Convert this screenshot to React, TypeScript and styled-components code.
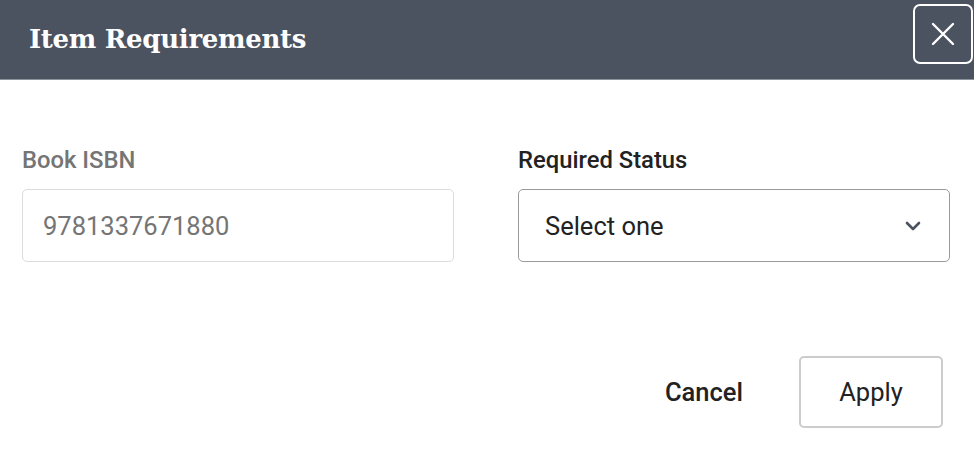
import { FunctionComponent } from 'react';
import styled, { createGlobalStyle } from 'styled-components';

const GlobalStyle = createGlobalStyle`
  html, body {
    margin: 0;
    padding: 0;
    background: #ffffff;
  }
  body {
    font-family: Roboto, 'Liberation Sans', sans-serif;
  }
`;

const App: FunctionComponent = () => {
  return (
    <>
      <GlobalStyle />
      <ModalContainer>
        <ModalHeader>
          <h1>Item Requirements</h1>
          <CloseButton aria-label="Close">
            <svg width="26" height="26" viewBox="0 0 26 26" fill="none">
              <path
                d="M3 3L23 23M23 3L3 23"
                stroke="#ffffff"
                strokeWidth="2.4"
                strokeLinecap="round"
              />
            </svg>
          </CloseButton>
        </ModalHeader>
        <ModalBody>
          <FieldRow>
            <Field>
              <FieldLabel muted>Book ISBN</FieldLabel>
              <TextBox muted>9781337671880</TextBox>
            </Field>
            <Field>
              <FieldLabel>Required Status</FieldLabel>
              <SelectBox>
                <span>Select one</span>
                <svg width="16" height="10" viewBox="0 0 16 10" fill="none">
                  <path
                    d="M2 2L8 8L14 2"
                    stroke="#4b5260"
                    strokeWidth="2.6"
                    strokeLinecap="round"
                    strokeLinejoin="round"
                  />
                </svg>
              </SelectBox>
            </Field>
          </FieldRow>
          <ModalFooter>
            <TextButton>Cancel</TextButton>
            <OutlineButton>Apply</OutlineButton>
          </ModalFooter>
        </ModalBody>
      </ModalContainer>
    </>
  );
};

export default App;

const ModalContainer = styled.div`
  width: 974px;
  height: 472px;
  background: #ffffff;
  overflow: hidden;
`;

const ModalHeader = styled.div`
  display: flex;
  align-items: flex-start;
  justify-content: space-between;
  height: 80px;
  background: #4b5260;
  border-bottom: 1px solid #8d929b;
  box-sizing: border-box;
  h1 {
    margin: 0;
    padding: 22px 0 0 29px;
    font-family: 'Roboto Slab', 'DejaVu Serif', 'Liberation Serif', serif;
    font-size: 26px;
    font-weight: bold;
    letter-spacing: -0.3px;
    color: #ffffff;
    line-height: 34px;
  }
`;

const CloseButton = styled.button`
  display: flex;
  align-items: center;
  justify-content: center;
  width: 60px;
  height: 60px;
  margin: 4px 1px 0 0;
  padding: 0;
  background: transparent;
  border: 2px solid #ffffff;
  border-radius: 7px;
  cursor: pointer;
`;

const ModalBody = styled.div`
  padding: 66px 24px 0 22px;
`;

const FieldRow = styled.div`
  display: grid;
  grid-template-columns: 432px 432px;
  column-gap: 64px;
`;

const Field = styled.div`
  display: flex;
  flex-direction: column;
`;

const FieldLabel = styled.label<{ muted?: boolean }>`
  font-size: 23.8px;
  font-weight: 500;
  line-height: 28px;
  color: ${({ muted }) => (muted ? '#757575' : '#222222')};
  margin-bottom: 15px;
`;

const TextBox = styled.div<{ muted?: boolean }>`
  display: flex;
  align-items: center;
  height: 73px;
  box-sizing: border-box;
  padding: 0 20px;
  border: 1px solid #dcdcdc;
  border-radius: 5px;
  font-size: 25.5px;
  color: ${({ muted }) => (muted ? '#757575' : '#222222')};
`;

const SelectBox = styled(TextBox)`
  justify-content: space-between;
  padding: 0 28px 0 26px;
  border-color: #9a9a9a;
  color: #222222;
  cursor: pointer;
`;

const ModalFooter = styled.div`
  display: flex;
  justify-content: flex-end;
  align-items: center;
  gap: 56px;
  margin-top: 94px;
  padding-right: 7px;
`;

const TextButton = styled.button`
  background: none;
  border: none;
  padding: 0;
  font-family: Roboto, 'Liberation Sans', sans-serif;
  font-size: 25.5px;
  font-weight: 500;
  color: #222222;
  cursor: pointer;
`;

const OutlineButton = styled.button`
  width: 144px;
  height: 72px;
  background: #ffffff;
  border: 2px solid #cccccc;
  border-radius: 5px;
  font-family: Roboto, 'Liberation Sans', sans-serif;
  font-size: 25.5px;
  font-weight: 400;
  color: #222222;
  cursor: pointer;
`;
